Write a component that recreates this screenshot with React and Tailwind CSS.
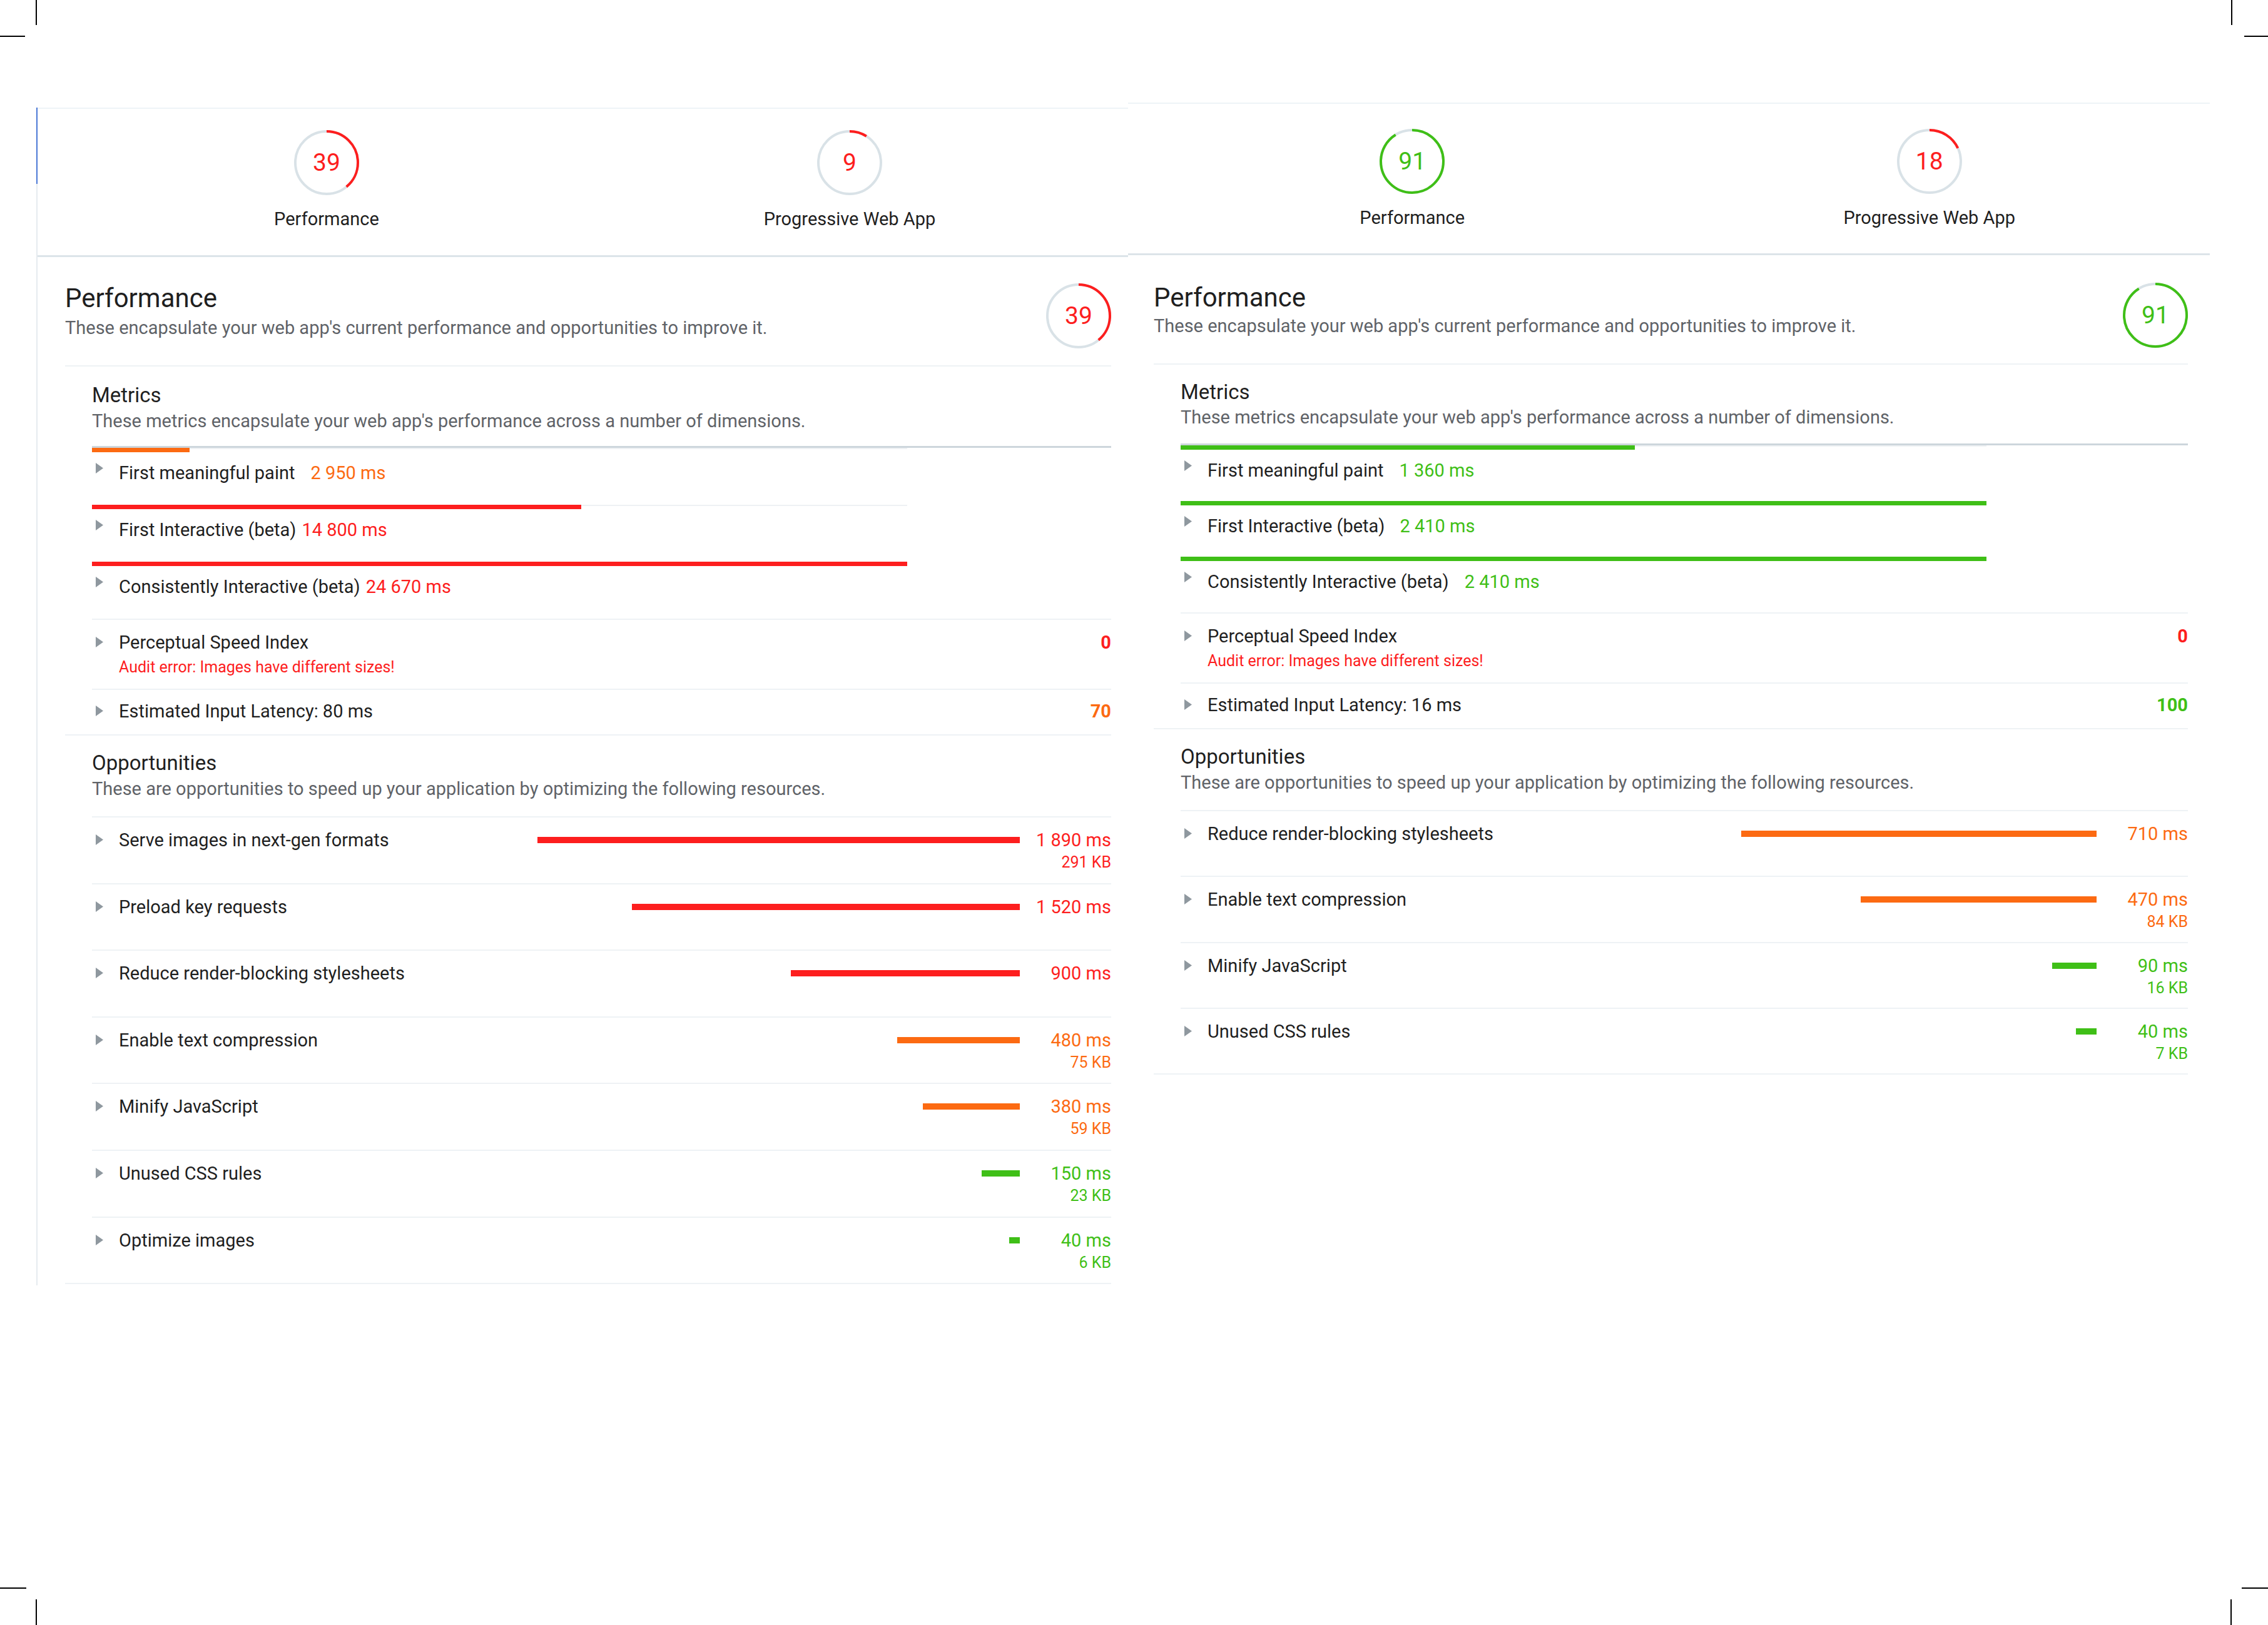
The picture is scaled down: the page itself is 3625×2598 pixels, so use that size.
import React from 'react';

const TONES = {
  red: { text: 'text-[#fd1e1e]', bg: 'bg-[#fd1e1e]', hex: '#fd1e1e' },
  orange: { text: 'text-[#fc6a12]', bg: 'bg-[#fc6a12]', hex: '#fc6a12' },
  green: { text: 'text-[#3fbf17]', bg: 'bg-[#3fbf17]', hex: '#3fbf17' },
};

const LEFT = {
  panel: 'relative ml-[58px] mt-[172px] w-[1745px] border-l-2 border-[#e6ebef] pb-[2px]',
  header: 'grid grid-cols-2 border-t-2 border-b-[3px] border-t-[#eef3f7] border-b-[#dce4e9] pl-[44px] pr-[27px] pt-[34px] pb-[41px]',
  body: 'pl-[44px] pr-[27px]',
  sectionHead: 'flex items-start justify-between border-b-2 border-[#eef2f5] pb-[27px] pt-[42px]',
  descMt: 'mt-[6px]',
  metricsGroup: 'border-b-2 border-[#eef2f5] pl-[43px] pt-[27px]',
  metricsDesc: 'mt-[5px]',
  listMt: 'mt-[23px]',
  metricPb: 'pb-[34px]',
  accent: true,
  oppRow: 'h-[106.6px]',
  gauges: [
    { score: 39, tone: 'red', label: 'Performance' },
    { score: 9, tone: 'red', label: 'Progressive Web App' },
  ],
  score: { score: 39, tone: 'red' },
  metrics: [
    { label: 'First meaningful paint', value: '2 950 ms', tone: 'orange', pct: 12, gap: 'ml-[25px]' },
    { label: 'First Interactive (beta)', value: '14 800 ms', tone: 'red', pct: 60, gap: 'ml-[9px]' },
    { label: 'Consistently Interactive (beta)', value: '24 670 ms', tone: 'red', pct: 100, gap: 'ml-[9px]' },
  ],
  psi: { value: '0', tone: 'red' },
  latency: { label: 'Estimated Input Latency: 80 ms', value: '70', tone: 'orange' },
  opportunities: [
    { label: 'Serve images in next-gen formats', ms: '1 890 ms', kb: '291 KB', tone: 'red', w: 771 },
    { label: 'Preload key requests', ms: '1 520 ms', tone: 'red', w: 620 },
    { label: 'Reduce render-blocking stylesheets', ms: '900 ms', tone: 'red', w: 366 },
    { label: 'Enable text compression', ms: '480 ms', kb: '75 KB', tone: 'orange', w: 196 },
    { label: 'Minify JavaScript', ms: '380 ms', kb: '59 KB', tone: 'orange', w: 155 },
    { label: 'Unused CSS rules', ms: '150 ms', kb: '23 KB', tone: 'green', w: 61 },
    { label: 'Optimize images', ms: '40 ms', kb: '6 KB', tone: 'green', w: 17 },
  ],
};

const RIGHT = {
  panel: 'relative mt-[164px] w-[1729px]',
  header: 'grid grid-cols-2 border-t-2 border-b-[3px] border-t-[#eef3f7] border-b-[#dce4e9] pl-[41px] pr-[35px] pt-[40px] pb-[40px]',
  body: 'pl-[41px] pr-[35px]',
  sectionHead: 'flex items-start justify-between border-b-2 border-[#eef2f5] pb-[25px] pt-[44px]',
  descMt: 'mt-[4px]',
  metricsGroup: 'border-b-2 border-[#eef2f5] pl-[43px] pt-[25px]',
  metricsDesc: 'mt-[4px]',
  listMt: 'mt-[25px]',
  metricPb: 'pb-[32px]',
  accent: false,
  oppRow: 'h-[105.3px]',
  gauges: [
    { score: 91, tone: 'green', label: 'Performance' },
    { score: 18, tone: 'red', label: 'Progressive Web App' },
  ],
  score: { score: 91, tone: 'green' },
  metrics: [
    { label: 'First meaningful paint', value: '1 360 ms', tone: 'green', pct: 56.4, gap: 'ml-[25px]' },
    { label: 'First Interactive (beta)', value: '2 410 ms', tone: 'green', pct: 100, gap: 'ml-[24px]' },
    { label: 'Consistently Interactive (beta)', value: '2 410 ms', tone: 'green', pct: 100, gap: 'ml-[25px]' },
  ],
  psi: { value: '0', tone: 'red' },
  latency: { label: 'Estimated Input Latency: 16 ms', value: '100', tone: 'green' },
  opportunities: [
    { label: 'Reduce render-blocking stylesheets', ms: '710 ms', tone: 'orange', w: 568 },
    { label: 'Enable text compression', ms: '470 ms', kb: '84 KB', tone: 'orange', w: 377 },
    { label: 'Minify JavaScript', ms: '90 ms', kb: '16 KB', tone: 'green', w: 71 },
    { label: 'Unused CSS rules', ms: '40 ms', kb: '7 KB', tone: 'green', w: 33 },
  ],
};

function Gauge({ score, tone }) {
  const t = TONES[tone];
  const c = 2 * Math.PI * 50;
  return (
    <div className="relative flex h-[104px] w-[104px] shrink-0 items-center justify-center">
      <svg className="absolute inset-0" width="104" height="104" viewBox="0 0 104 104">
        <circle cx="52" cy="52" r="50" fill="none" stroke="#d9e2e7" strokeWidth="4" />
        <circle
          cx="52"
          cy="52"
          r="50"
          fill="none"
          stroke={t.hex}
          strokeWidth="4"
          strokeDasharray={`${(c * score) / 100} ${c}`}
          transform="rotate(-90 52 52)"
        />
      </svg>
      <span className={`relative text-[39px] leading-none ${t.text}`}>{score}</span>
    </div>
  );
}

function Arrow({ className }) {
  return (
    <svg className={`shrink-0 ${className}`} width="12" height="17" viewBox="0 0 12 17">
      <polygon points="0,0 12,8.5 0,17" fill="#8f989f" />
    </svg>
  );
}

function MetricRow({ m, pb }) {
  const t = TONES[m.tone];
  return (
    <div className={pb}>
      <div className="relative h-[7px] w-[80%]">
        <div className="h-[2px] bg-[#eef1f4]" />
        <div className={`absolute left-0 top-0 h-[7px] ${t.bg}`} style={{ width: `${m.pct}%` }} />
      </div>
      <div className="mt-[16px] flex items-start pl-[6px]">
        <Arrow className="mt-[1px]" />
        <span className="ml-[25px] text-[29px] leading-[34px] text-[#1f1f1f]">{m.label}</span>
        <span className={`${m.gap} text-[29px] leading-[34px] ${t.text}`}>{m.value}</span>
      </div>
    </div>
  );
}

function OpportunityRow({ o, rowH }) {
  const t = TONES[o.tone];
  return (
    <div className={`${rowH} border-t-2 border-[#eef2f5] pt-[19px]`}>
      <div className="flex items-start pl-[6px]">
        <Arrow className="mt-[8px]" />
        <span className="ml-[25px] flex-1 text-[29px] leading-[34px] text-[#1f1f1f]">{o.label}</span>
        <div className={`mt-[12px] h-[10px] ${t.bg}`} style={{ width: `${o.w}px` }} />
        <div className={`flex w-[146px] flex-col items-end ${t.text}`}>
          <span className="text-[29px] leading-[34px]">{o.ms}</span>
          {o.kb && <span className="mt-[4px] text-[25px] leading-[29px]">{o.kb}</span>}
        </div>
      </div>
    </div>
  );
}

function Panel({ d }) {
  return (
    <div className={d.panel}>
      {d.accent && <div className="absolute -left-[2px] top-0 h-[122px] w-[2px] bg-[#4b78d6]" />}

      {/* score summary */}
      <div className={d.header}>
        {d.gauges.map((g) => (
          <div key={g.label} className="flex flex-col items-center">
            <Gauge score={g.score} tone={g.tone} />
            <div className="mt-[21px] text-[29px] leading-[34px] text-[#1f1f1f]">{g.label}</div>
          </div>
        ))}
      </div>

      <div className={d.body}>
        {/* category header */}
        <div className={d.sectionHead}>
          <div>
            <h1 className="text-[42px] leading-[48px] text-[#1f1f1f]">Performance</h1>
            <p className={`${d.descMt} text-[29px] leading-[34px] text-[#5f6368]`}>
              These encapsulate your web app's current performance and opportunities to improve it.
            </p>
          </div>
          <Gauge score={d.score.score} tone={d.score.tone} />
        </div>

        {/* metrics */}
        <div className={d.metricsGroup}>
          <h2 className="text-[33px] leading-[38px] text-[#1f1f1f]">Metrics</h2>
          <p className={`${d.metricsDesc} text-[29px] leading-[34px] text-[#5f6368]`}>
            These metrics encapsulate your web app's performance across a number of dimensions.
          </p>
          <div className={`${d.listMt} border-t-[3px] border-[#cdd6dc]`}>
            {d.metrics.map((m) => (
              <MetricRow key={m.label} m={m} pb={d.metricPb} />
            ))}
            <div className="flex items-start justify-between border-t-2 border-[#eef2f5] pb-[20px] pt-[19px]">
              <div className="flex items-start pl-[6px]">
                <Arrow className="mt-[8px]" />
                <div className="ml-[25px]">
                  <div className="text-[29px] leading-[34px] text-[#1f1f1f]">Perceptual Speed Index</div>
                  <div className="mt-[8px] text-[25px] leading-[29px] text-[#fd1e1e]">
                    Audit error: Images have different sizes!
                  </div>
                </div>
              </div>
              <span className={`text-[29px] font-bold leading-[34px] ${TONES[d.psi.tone].text}`}>{d.psi.value}</span>
            </div>
            <div className="flex items-start justify-between border-t-2 border-[#eef2f5] pb-[20px] pt-[17px]">
              <div className="flex items-start pl-[6px]">
                <Arrow className="mt-[8px]" />
                <span className="ml-[25px] text-[29px] leading-[34px] text-[#1f1f1f]">{d.latency.label}</span>
              </div>
              <span className={`text-[29px] font-bold leading-[34px] ${TONES[d.latency.tone].text}`}>
                {d.latency.value}
              </span>
            </div>
          </div>
        </div>

        {/* opportunities */}
        <div className="border-b-2 border-[#eef2f5] pl-[43px] pt-[25px]">
          <h2 className="text-[33px] leading-[38px] text-[#1f1f1f]">Opportunities</h2>
          <p className="mt-[5px] text-[29px] leading-[34px] text-[#5f6368]">
            These are opportunities to speed up your application by optimizing the following resources.
          </p>
          <div className="mt-[27px]">
            {d.opportunities.map((o) => (
              <OpportunityRow key={o.label} o={o} rowH={d.oppRow} />
            ))}
          </div>
        </div>
      </div>
    </div>
  );
}

export default function App() {
  return (
    <div className="relative h-[2598px] w-[3625px] overflow-hidden bg-white [font-family:Roboto,'Noto_Sans',sans-serif]">
      {/* crop marks */}
      <div className="absolute left-[57px] top-0 h-[40px] w-[2px] bg-black" />
      <div className="absolute left-0 top-[57px] h-[2px] w-[40px] bg-black" />
      <div className="absolute left-[3566px] top-0 h-[40px] w-[2px] bg-black" />
      <div className="absolute left-[3587px] top-[57px] h-[2px] w-[38px] bg-black" />
      <div className="absolute left-0 top-[2538px] h-[2px] w-[42px] bg-black" />
      <div className="absolute left-[57px] top-[2557px] h-[41px] w-[2px] bg-black" />
      <div className="absolute left-[3583px] top-[2538px] h-[2px] w-[42px] bg-black" />
      <div className="absolute left-[3565px] top-[2557px] h-[41px] w-[2px] bg-black" />

      <div className="flex items-start">
        <Panel d={LEFT} />
        <Panel d={RIGHT} />
      </div>
    </div>
  );
}
